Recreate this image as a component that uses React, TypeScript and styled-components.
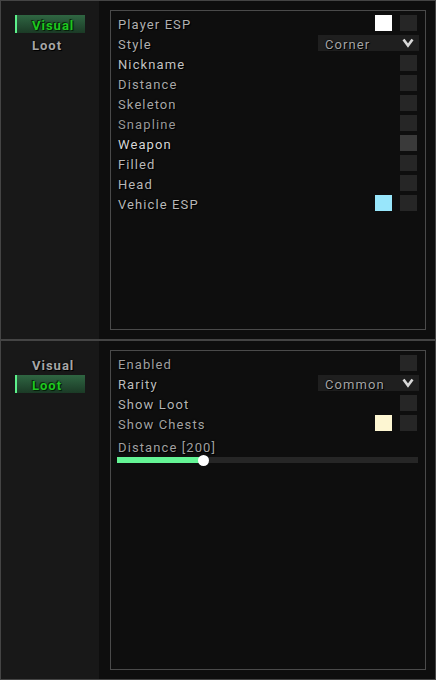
import React from "react";
import styled, { createGlobalStyle } from "styled-components";

const Global = createGlobalStyle`
  html, body { margin: 0; padding: 0; background: #0e0e0e; }
  body { font-family: Roboto, "Noto Sans", "Liberation Sans", sans-serif; }
  * { box-sizing: border-box; }
`;

const Page = styled.div`
  width: 436px;
  display: flex;
  flex-direction: column;
`;

const Panel = styled.div`
  width: 436px;
  height: 340px;
  border: 1px solid #444;
  display: flex;
  background: #0e0e0e;
`;

const Sidebar = styled.div`
  width: 98px;
  background: #181818;
  padding: 14px 0 0 14px;
  display: flex;
  flex-direction: column;
  gap: 2px;
`;

const Tab = styled.div<{ $active?: boolean }>`
  width: 70px;
  height: 18px;
  padding: 2px 0 0 15px;
  display: flex;
  align-items: center;
  font-size: 13px;
  font-weight: 700;
  letter-spacing: 1px;
  color: ${(p) => (p.$active ? "#1fc81f" : "#a6a6a6")};
  text-shadow: ${(p) =>
    p.$active
      ? "0 0 2px #06200a, 1px 1px 0 #06200a, -1px -1px 0 #0a2a10"
      : "0 0 2px #000, 1px 1px 0 #000"};
  border-left: 2px solid ${(p) => (p.$active ? "#5cf08a" : "transparent")};
  background: ${(p) =>
    p.$active ? "linear-gradient(#2f6642, #1b3a26)" : "transparent"};
`;

const Main = styled.div`
  flex: 1;
  padding: 9px 9px 9px 11px;
  display: flex;
`;

const Box = styled.div`
  flex: 1;
  border: 1px solid #4a4a4a;
  padding: 4px 7px 0 6px;
  display: flex;
  flex-direction: column;
  gap: 4px;
`;

const Row = styled.div`
  height: 16px;
  display: flex;
  align-items: center;
`;

const Label = styled.span<{ $c: string }>`
  flex: 1;
  margin-top: 2px;
  padding-left: 1px;
  font-size: 13px;
  letter-spacing: 1.1px;
  color: ${(p) => p.$c};
  text-shadow: 0 0 2px #000, 1px 1px 0 #000;
  white-space: nowrap;
`;

const Check = styled.div<{ $hover?: boolean }>`
  width: 17px;
  height: 16px;
  margin-right: 1px;
  background: ${(p) => (p.$hover ? "#3a3a3a" : "#262626")};
`;

const Swatch = styled.div<{ $color: string }>`
  width: 17px;
  height: 16px;
  margin-right: 8px;
  background: ${(p) => p.$color};
`;

const Select = styled.div`
  width: 101px;
  height: 16px;
  margin-right: -1px;
  background: #1f1f1f;
  display: flex;
  align-items: center;
  justify-content: space-between;
  padding: 0 5px 0 7px;
  font-size: 13px;
  letter-spacing: 1.1px;
  color: #a4a4a4;
  text-shadow: 0 0 2px #000, 1px 1px 0 #000;
`;

const SelectText = styled.span`
  margin-top: 2px;
`;

const SliderBlock = styled.div`
  margin-top: 3px;
  display: flex;
  flex-direction: column;
`;

const Track = styled.div`
  position: relative;
  margin-top: 3px;
  height: 6px;
  background: #262626;
`;

const Fill = styled.div`
  height: 6px;
  background: #64f595;
`;

const Knob = styled.div`
  position: absolute;
  top: -2.5px;
  width: 11px;
  height: 11px;
  margin-left: -5.5px;
  border-radius: 50%;
  background: #fff;
`;

const Chevron = () => (
  <svg width="12" height="10" viewBox="0 0 12 10">
    <polyline
      points="1.5,1.5 6,7.5 10.5,1.5"
      fill="none"
      stroke="#d8d8d8"
      strokeWidth="2.6"
      strokeLinejoin="miter"
    />
  </svg>
);

type Item =
  | { kind: "check"; label: string; c: string; swatch?: string; hover?: boolean }
  | { kind: "select"; label: string; c: string; value: string };

const visualItems: Item[] = [
  { kind: "check", label: "Player ESP", c: "#b0b0b0", swatch: "#ffffff" },
  { kind: "select", label: "Style", c: "#b0b0b0", value: "Corner" },
  { kind: "check", label: "Nickname", c: "#c2c2c2" },
  { kind: "check", label: "Distance", c: "#a6a6a6" },
  { kind: "check", label: "Skeleton", c: "#a6a6a6" },
  { kind: "check", label: "Snapline", c: "#989898" },
  { kind: "check", label: "Weapon", c: "#d6d6d6", hover: true },
  { kind: "check", label: "Filled", c: "#b8b8b8" },
  { kind: "check", label: "Head", c: "#b8b8b8" },
  { kind: "check", label: "Vehicle ESP", c: "#b8b8b8", swatch: "#98e6fb" },
];

const lootItems: Item[] = [
  { kind: "check", label: "Enabled", c: "#a0a0a0" },
  { kind: "select", label: "Rarity", c: "#bcbcbc", value: "Common" },
  { kind: "check", label: "Show Loot", c: "#b4b4b4" },
  { kind: "check", label: "Show Chests", c: "#a2a2a2", swatch: "#fdf6d2" },
];

const Items = ({ items }: { items: Item[] }) => (
  <>
    {items.map((it) => (
      <Row key={it.label}>
        <Label $c={it.c}>{it.label}</Label>
        {it.kind === "check" ? (
          <>
            {it.swatch && <Swatch $color={it.swatch} />}
            <Check $hover={it.hover} />
          </>
        ) : (
          <Select>
            <SelectText>{it.value}</SelectText>
            <Chevron />
          </Select>
        )}
      </Row>
    ))}
  </>
);

export default function App() {
  const dist = 200;
  const max = 700;
  const pct = (dist / max) * 100;
  return (
    <Page>
      <Global />
      <Panel>
        <Sidebar>
          <Tab $active>Visual</Tab>
          <Tab>Loot</Tab>
        </Sidebar>
        <Main>
          <Box>
            <Items items={visualItems} />
          </Box>
        </Main>
      </Panel>
      <Panel>
        <Sidebar>
          <Tab>Visual</Tab>
          <Tab $active>Loot</Tab>
        </Sidebar>
        <Main>
          <Box>
            <Items items={lootItems} />
            <SliderBlock>
              <Row>
                <Label $c="#a0a0a0">Distance [{dist}]</Label>
              </Row>
              <Track>
                <Fill style={{ width: `${pct}%` }} />
                <Knob style={{ left: `${pct}%` }} />
              </Track>
            </SliderBlock>
          </Box>
        </Main>
      </Panel>
    </Page>
  );
}
